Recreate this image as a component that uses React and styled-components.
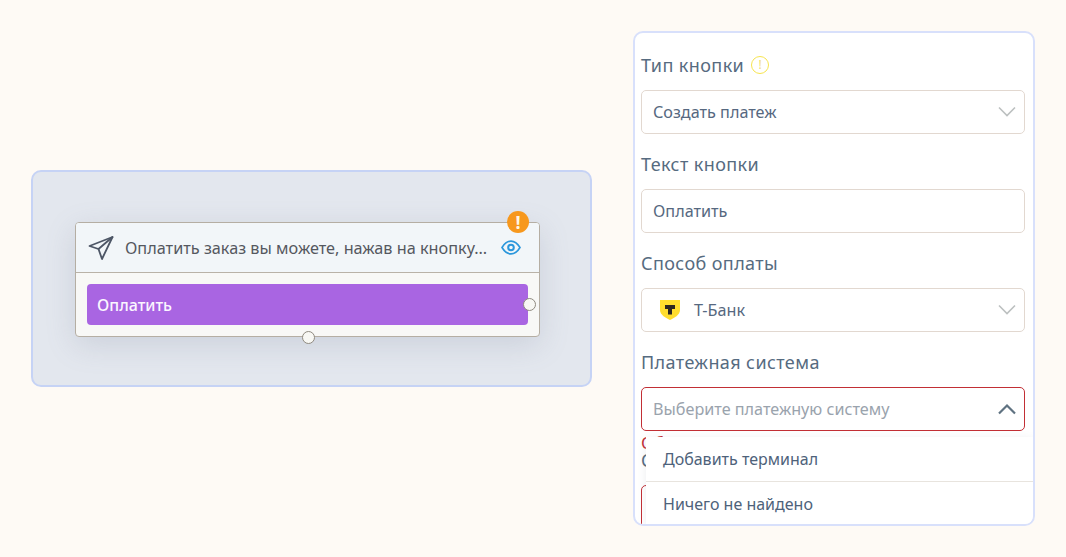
import styled, { createGlobalStyle } from "styled-components";

const GlobalStyle = createGlobalStyle`
	html, body {
		margin: 0;
		background: #fefaf5;
	}
	* {
		box-sizing: border-box;
	}
`;

function Chevron({ open }) {
	return (
		<ChevronIcon $open={open} viewBox="0 0 18 12" width="18" height="12">
			<path d={open ? "M1 10.5 L9 2.5 L17 10.5" : "M1 1.5 L9 9.5 L17 1.5"} fill="none" />
		</ChevronIcon>
	);
}

function PlaneIcon() {
	return (
		<svg width="26" height="26" viewBox="0 0 26 26" fill="none" stroke="#4d5666" strokeWidth="1.8" strokeLinejoin="round" strokeLinecap="round">
			<path d="M1.5 11 L24.5 2 L14 24 L10.5 14 Z" />
			<path d="M10.5 14 L24.5 2" />
		</svg>
	);
}

function EyeIcon() {
	return (
		<svg width="20" height="15" viewBox="0 0 20 15" fill="none" stroke="#2b97dc" strokeWidth="1.6">
			<path d="M1 7.5 C 3.6 3.2 6.7 1.1 10 1.1 C 13.3 1.1 16.4 3.2 19 7.5 C 16.4 11.8 13.3 13.9 10 13.9 C 6.7 13.9 3.6 11.8 1 7.5 Z" />
			<circle cx="10" cy="7.5" r="2.8" strokeWidth="2" />
		</svg>
	);
}

function BankLogo() {
	return (
		<svg width="22" height="22" viewBox="0 0 22 22">
			<path d="M1 1 H21 V11 C21 16 15 19 11 21 C7 19 1 16 1 11 Z" fill="#ffdd2d" />
			<path d="M6 6 H16 V10 H13 V15.5 H9 V10 H6 Z" fill="#2c2620" />
		</svg>
	);
}

export default function App() {
	return (
		<Page>
			<GlobalStyle />
			<Canvas>
				<Node>
					<Badge>!</Badge>
					<MessageRow>
						<PlaneIcon />
						<MessageText>Оплатить заказ вы можете, нажав на кнопку…</MessageText>
						<EyeIcon />
					</MessageRow>
					<ButtonRow>
						<PayButton>Оплатить</PayButton>
						<SidePort />
					</ButtonRow>
					<BottomPort />
				</Node>
			</Canvas>
			<Panel>
				<Label>
					Тип кнопки
					<HintIcon>!</HintIcon>
				</Label>
				<Field>
					<Value>Создать платеж</Value>
					<Chevron />
				</Field>
				<Label>Текст кнопки</Label>
				<Field>
					<Value>Оплатить</Value>
				</Field>
				<Label>Способ оплаты</Label>
				<Field>
					<BankValue>
						<BankLogo />
						<Value>Т-Банк</Value>
					</BankValue>
					<Chevron />
				</Field>
				<Label>Платежная система</Label>
				<Field $error>
					<Placeholder>Выберите платежную систему</Placeholder>
					<Chevron open />
				</Field>
				<ErrorText>Обязательное поле</ErrorText>
				<NextLabel>Сумма платежа</NextLabel>
				<Field $error />
				<Dropdown>
					<Option>Добавить терминал</Option>
					<Option>Ничего не найдено</Option>
				</Dropdown>
			</Panel>
		</Page>
	);
}

const Page = styled.div`
	width: 1066px;
	height: 557px;
	padding-left: 31px;
	display: flex;
	align-items: center;
	gap: 41px;
	font-family: "Noto Sans", sans-serif;
	overflow: hidden;
`;

const Canvas = styled.div`
	width: 561px;
	height: 217px;
	padding: 50px 0 0 42px;
	background: #e3e7ee;
	border: 2px solid #c6d3f5;
	border-radius: 10px;
`;

const Node = styled.div`
	position: relative;
	width: 465px;
	height: 115px;
	background: #f8f8f6;
	border: 1px solid #b5aea3;
	border-radius: 4px;
	box-shadow: 0 8px 30px rgba(110, 120, 145, 0.2);
`;

const Badge = styled.div`
	position: absolute;
	top: -12px;
	right: 10px;
	width: 22px;
	height: 22px;
	border-radius: 50%;
	background: #f7981d;
	color: #fff6e6;
	font-size: 18px;
	font-weight: 700;
	line-height: 22px;
	text-align: center;
`;

const MessageRow = styled.div`
	height: 50px;
	padding: 0 18px 0 12px;
	display: flex;
	align-items: center;
	background: #f2f6f9;
	border-bottom: 1px solid #b9b2a7;
	border-radius: 3px 3px 0 0;
`;

const MessageText = styled.span`
	flex: 1;
	margin-left: 11px;
	font-size: 16.25px;
	color: #55585f;
	white-space: nowrap;
`;

const ButtonRow = styled.div`
	position: relative;
	padding: 11px 11px 0;
`;

const PayButton = styled.div`
	height: 41px;
	padding-left: 10px;
	display: flex;
	align-items: center;
	background: #a965e2;
	border-radius: 4px;
	color: #fbf6ff;
	font-size: 16px;
	font-weight: 500;
`;

const Port = styled.div`
	position: absolute;
	width: 13px;
	height: 13px;
	border-radius: 50%;
	background: #f8f8f4;
	border: 1px solid #8f8a80;
`;

const SidePort = styled(Port)`
	top: 25px;
	right: 3px;
`;

const BottomPort = styled(Port)`
	bottom: -8px;
	left: 226px;
`;

const Panel = styled.div`
	position: relative;
	width: 402px;
	height: 495px;
	padding: 2px 8px 0 6px;
	background: #fff;
	border: 2px solid #d8e0fb;
	border-radius: 10px;
	overflow: hidden;
`;

const Label = styled.div`
	height: 55px;
	padding-top: 4px;
	display: flex;
	align-items: center;
	gap: 7px;
	font-size: 18px;
	line-height: 22px;
	letter-spacing: 0.4px;
	color: #566b80;
`;

const HintIcon = styled.span`
	width: 18px;
	height: 18px;
	border: 1.5px solid #f6e44f;
	border-radius: 50%;
	color: #f3de70;
	font-size: 12px;
	line-height: 15px;
	letter-spacing: 0;
	text-align: center;
`;

const Field = styled.div`
	height: 44px;
	padding: 0 8px 0 11px;
	display: flex;
	align-items: center;
	justify-content: space-between;
	background: #fff;
	border: 1px solid ${(p) => (p.$error ? "#c22f35" : "#e2d8d0")};
	border-radius: 5px;
`;

const Value = styled.span`
	font-size: 16.2px;
	color: #566880;
`;

const Placeholder = styled(Value)`
	color: #9aa3ad;
`;

const BankValue = styled.div`
	margin-left: 6px;
	display: flex;
	align-items: center;
	gap: 13px;
`;

const ChevronIcon = styled.svg`
	path {
		stroke: ${(p) => (p.$open ? "#5f7281" : "#bcc0c0")};
		stroke-width: ${(p) => (p.$open ? 2.2 : 1.6)};
	}
`;

const ErrorText = styled.div`
	margin-top: 2px;
	font-size: 17px;
	line-height: 20px;
	color: #c22f35;
`;

const NextLabel = styled.div`
	margin-top: -4px;
	height: 36px;
	font-size: 18px;
	line-height: 22px;
	color: #566b80;
`;

const Dropdown = styled.div`
	position: absolute;
	left: 11px;
	right: 0;
	bottom: 0;
	height: 87px;
	background: #fff;
	box-shadow: 0 2px 8px rgba(120, 130, 150, 0.14);
`;

const Option = styled.div`
	height: 44px;
	padding-left: 17px;
	display: flex;
	align-items: center;
	font-size: 16px;
	color: #4e627a;

	& + & {
		border-top: 1px solid #e8e4de;
	}
`;
